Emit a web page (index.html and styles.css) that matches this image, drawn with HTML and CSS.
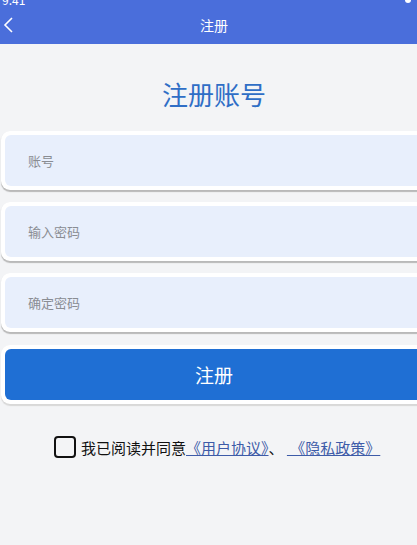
FILE: index.html
```html
<!DOCTYPE html>
<html lang="zh-CN">
<head>
  <meta charset="UTF-8">
  <title>注册</title>
  <link rel="stylesheet" href="styles.css">
</head>
<body>
  <div class="status-bar">
    <span class="time">9:41</span>
    <span class="dot"></span>
  </div>
  <div class="nav">
    <svg class="back" width="12" height="18" viewBox="0 0 12 18"><path d="M9 2 L2 9 L9 16" fill="none" stroke="#fff" stroke-width="1.6"/></svg>
    <span class="nav-title">注册</span>
  </div>

  <div class="main">
    <h2 class="title">注册账号</h2>
    <div class="field"><input type="text" placeholder="账号"></div>
    <div class="field"><input type="password" placeholder="输入密码"></div>
    <div class="field"><input type="password" placeholder="确定密码"></div>
    <div class="field btn-wrap"><button>注册</button></div>

    <div class="agree">
      <span class="check"></span>
      <span>我已阅读并同意<a href="#">《用户协议》</a>、 <a href="#">&nbsp;《隐私政策》</a></span>
    </div>
  </div>
</body>
</html>
```

FILE: styles.css
```css
html {
  overflow: hidden;
}
body {
  font-family: "Noto Sans CJK SC", "Noto Sans", sans-serif;
  margin: 0;
  padding: 0;
  width: 428px;
  background: #f3f4f6;
  color: #111;
}
.status-bar {
  background: #4a6edb;
  height: 6px;
  position: relative;
  overflow: hidden;
}
.status-bar .time {
  position: absolute;
  left: 2px;
  top: -9px;
  color: #fff;
  font-size: 12px;
}
.status-bar .dot {
  position: absolute;
  left: 405px;
  top: -3px;
  width: 6px;
  height: 6px;
  border-radius: 50%;
  background: #fff;
}
.nav {
  background: #4a6edb;
  height: 38px;
  display: flex;
  align-items: center;
  justify-content: center;
  position: relative;
}
.back {
  position: absolute;
  left: 3px;
  top: 10px;
}
.nav-title {
  color: #fff;
  font-size: 14px;
}
.main {
  padding-top: 32px;
}
.title {
  margin: 0 0 19px;
  text-align: center;
  font-size: 26px;
  font-weight: 400;
  color: #2f6ec6;
  line-height: 36px;
}
.field {
  width: 440px;
  margin: 0 0 12px 1px;
  padding: 4px;
  background: #fff;
  border-radius: 9px;
  box-shadow: 0 1.5px 1px #b9b9b9;
}
.field input {
  display: block;
  width: 100%;
  box-sizing: border-box;
  height: 51px;
  border: none;
  border-radius: 6px;
  background: #e8effc;
  padding: 0 23px;
  font-family: inherit;
  font-size: 13px;
  color: #333;
  outline: none;
}
.field input::placeholder {
  color: #8a8d93;
}
.btn-wrap {
  margin-top: 13px;
  box-shadow: 0 1.5px 1px #d8d8d8;
}
.btn-wrap button {
  display: block;
  width: 100%;
  height: 51px;
  border: none;
  border-radius: 6px;
  background: #1f6fd4;
  color: #fff;
  font-family: inherit;
  font-size: 19px;
  text-align: left;
  padding-left: 190px;
}
.agree {
  display: flex;
  align-items: center;
  gap: 5px;
  margin: 32px 0 0 54px;
  font-size: 15px;
}
.check {
  width: 18px;
  height: 18px;
  border: 2px solid #111;
  border-radius: 4px;
}
.agree a {
  color: #3d5ba8;
}
```
